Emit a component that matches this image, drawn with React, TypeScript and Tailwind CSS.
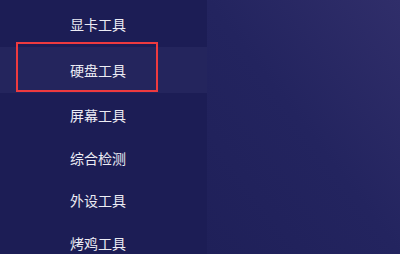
import React from "react";

const items = [
  { t: "显卡工具", h: "h-[46px]" },
  { t: "硬盘工具", h: "h-[46px]" },
  { t: "屏幕工具", h: "h-[44px]" },
  { t: "综合检测", h: "h-[42px]" },
  { t: "外设工具", h: "h-[43px]" },
  { t: "烤鸡工具", h: "h-[43px]" },
];

export default function App() {
  return (
    <div
      className="relative flex h-[254px] w-[400px] overflow-hidden bg-[#1e1f58]"
      style={{ fontFamily: '"Noto Sans CJK SC", "Noto Sans", sans-serif' }}
    >
      <div className="flex w-[207px] flex-col bg-[#1c1d55] pt-[1px]">
        {items.map((it, i) => (
          <div
            key={it.t}
            className={
              "flex shrink-0 items-center pl-[70px] text-[14px] text-[#ececf4] " +
              it.h +
              (i === 1 ? " bg-[#24255d]" : "")
            }
          >
            {it.t}
          </div>
        ))}
      </div>
      <div className="flex-1 bg-gradient-to-bl from-[#302e6a] via-[#23245f] to-[#1f2059]" />
      <div className="absolute left-[16px] top-[42px] h-[50px] w-[142px] border-2 border-[#ee3a3f]" />
    </div>
  );
}
